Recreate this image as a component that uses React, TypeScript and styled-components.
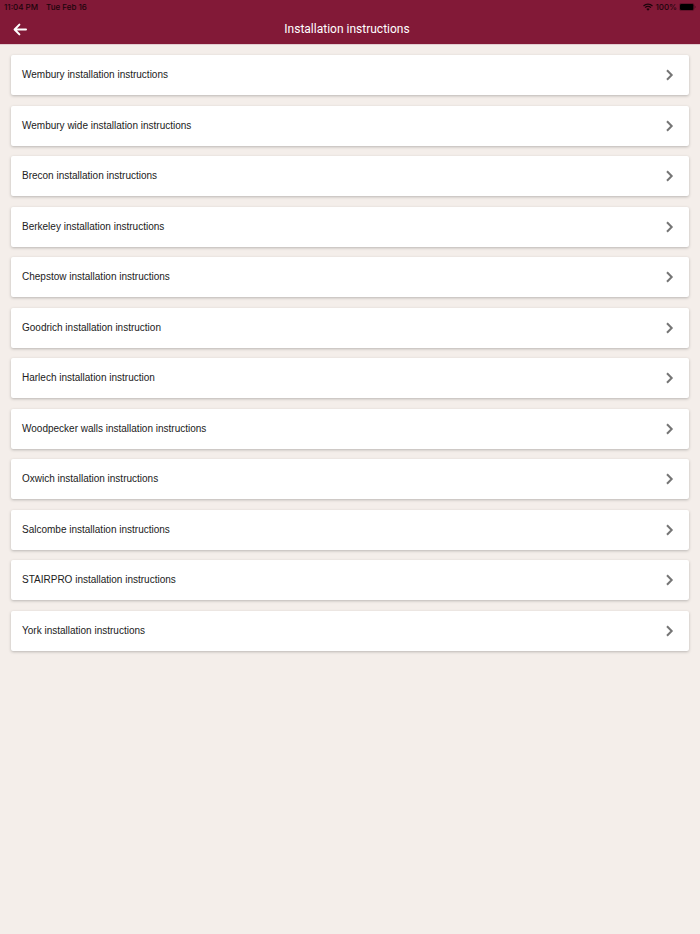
import React from "react";
import styled, { createGlobalStyle } from "styled-components";

const GlobalStyle = createGlobalStyle`
  *, *::before, *::after { box-sizing: border-box; }
  body {
    margin: 0;
    background: #f4eeea;
    color: #212121;
    font-family: "Liberation Sans", Arial, sans-serif;
  }
`;

const Header = styled.header`
  background: #821937;
  border-bottom: 1px solid #e2ccd0;
`;

const StatusBar = styled.div`
  display: flex;
  align-items: center;
  justify-content: space-between;
  height: 14px;
  padding: 0 4px;
  color: #1c050c;
  font-family: Inter, "Liberation Sans", sans-serif;
  font-size: 8px;
  font-weight: 500;
  line-height: 14px;
`;

const StatusGroup = styled.div<{ $gap: number }>`
  display: flex;
  align-items: center;
  gap: ${({ $gap }) => $gap}px;
`;

const TitleBar = styled.div`
  display: grid;
  grid-template-columns: 40px 1fr 46px;
  align-items: center;
  height: 30px;
`;

const BackButton = styled.button`
  display: flex;
  align-items: center;
  justify-content: center;
  height: 30px;
  padding: 0;
  border: 0;
  background: none;
  color: #fff;
  cursor: pointer;
`;

const Title = styled.h1`
  margin: 0;
  color: #fff;
  font-family: Roboto, "Liberation Sans", sans-serif;
  font-size: 12px;
  font-weight: 400;
  line-height: 16px;
  text-align: center;
`;

const List = styled.ul`
  margin: 0;
  padding: 10px 11px;
  list-style: none;
`;

const Item = styled.li`
  margin-bottom: 11px;

  &:nth-child(even) {
    margin-bottom: 10px;
  }
`;

const Card = styled.a`
  display: flex;
  align-items: center;
  justify-content: space-between;
  min-height: 40px;
  padding: 0 11px;
  border-radius: 2px;
  background: #fff;
  box-shadow: 0 1px 3px rgba(0, 0, 0, 0.24);
  color: inherit;
  font-size: 10px;
  line-height: 14px;
  text-decoration: none;
`;

const items = [
  "Wembury installation instructions",
  "Wembury wide installation instructions",
  "Brecon installation instructions",
  "Berkeley installation instructions",
  "Chepstow installation instructions",
  "Goodrich installation instruction",
  "Harlech installation instruction",
  "Woodpecker walls installation instructions",
  "Oxwich installation instructions",
  "Salcombe installation instructions",
  "STAIRPRO installation instructions",
  "York installation instructions",
];

const BackArrow = () => (
  <svg
    width="14"
    height="14"
    viewBox="0 0 14 14"
    fill="none"
    stroke="currentColor"
    strokeWidth="2"
    strokeLinecap="round"
    strokeLinejoin="round"
    aria-hidden="true"
  >
    <path d="M6.4 2.6 1.6 7.5l4.8 4.9M1.8 7.5H13" />
  </svg>
);

const Chevron = () => (
  <svg width="16" height="16" viewBox="0 0 16 16" fill="none" stroke="#757575" strokeWidth="2" aria-hidden="true">
    <path d="M5 3.2 9.7 8 5 12.8" />
  </svg>
);

const Wifi = () => (
  <svg width="10" height="8" viewBox="0 0 20 16" fill="none" stroke="currentColor" strokeWidth="2.4" aria-hidden="true">
    <path d="M1 6C6 .8 14 .8 19 6M4.2 9.3c3.2-3.4 8.4-3.4 11.6 0" />
    <path d="M6.8 11.9c1.8-1.8 4.6-1.8 6.4 0L10 15.3z" fill="currentColor" stroke="none" />
  </svg>
);

const Battery = () => (
  <svg width="17" height="8" viewBox="0 0 17 8" aria-hidden="true">
    <rect x=".4" y=".4" width="14.6" height="7.2" rx="2" fill="none" stroke="currentColor" strokeWidth=".6" opacity=".5" />
    <rect x="1" y="1" width="13.4" height="6" rx="1.2" fill="#000" />
    <path d="M15.8 2.8v2.4c1-.4 1-2 0-2.4z" fill="currentColor" opacity=".6" />
  </svg>
);

export default function App() {
  return (
    <>
      <GlobalStyle />
      <Header>
        <StatusBar>
          <StatusGroup $gap={8}>
            <span>11:04 PM</span>
            <span>Tue Feb 16</span>
          </StatusGroup>
          <StatusGroup $gap={2}>
            <Wifi />
            <span>100%</span>
            <Battery />
          </StatusGroup>
        </StatusBar>
        <TitleBar>
          <BackButton type="button" aria-label="Back">
            <BackArrow />
          </BackButton>
          <Title>Installation instructions</Title>
        </TitleBar>
      </Header>
      <main>
        <List>
          {items.map((label) => (
            <Item key={label}>
              <Card href="#">
                <span>{label}</span>
                <Chevron />
              </Card>
            </Item>
          ))}
        </List>
      </main>
    </>
  );
}
